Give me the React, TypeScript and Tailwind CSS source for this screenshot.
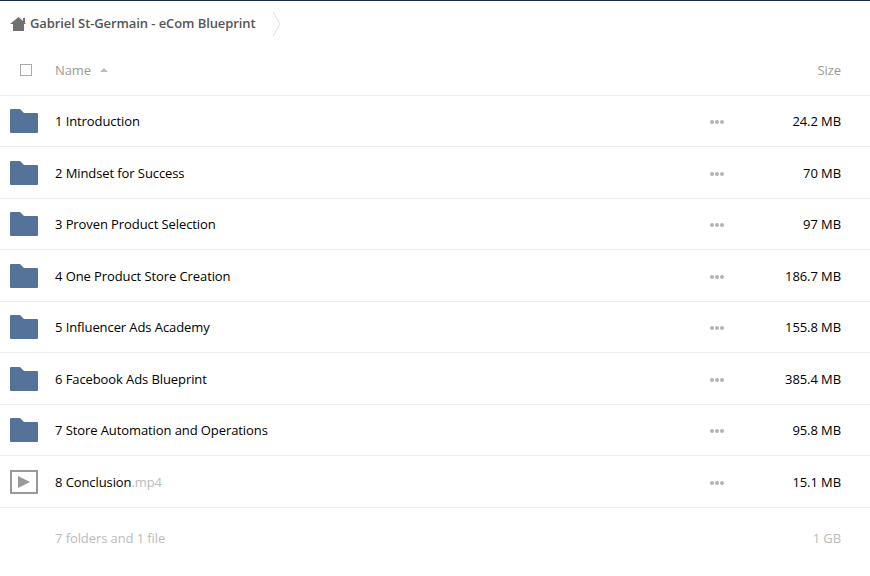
const rows = [
  { name: "1 Introduction", size: "24.2 MB" },
  { name: "2 Mindset for Success", size: "70 MB" },
  { name: "3 Proven Product Selection", size: "97 MB" },
  { name: "4 One Product Store Creation", size: "186.7 MB" },
  { name: "5 Influencer Ads Academy", size: "155.8 MB" },
  { name: "6 Facebook Ads Blueprint", size: "385.4 MB" },
  { name: "7 Store Automation and Operations", size: "95.8 MB" },
  { name: "8 Conclusion", ext: ".mp4", size: "15.1 MB" },
];

function FolderIcon() {
  return (
    <svg width="28" height="24" viewBox="0 0 28 24" className="block">
      <path d="M0 1a1 1 0 0 1 1-1h9l4 4h13a1 1 0 0 1 1 1v18a1 1 0 0 1-1 1H1a1 1 0 0 1-1-1z" fill="#557398" />
    </svg>
  );
}

function VideoIcon() {
  return (
    <svg width="28" height="24" viewBox="0 0 28 24" className="block">
      <rect x="1" y="1" width="26" height="22" fill="none" stroke="#999" strokeWidth="2" />
      <path d="M8 6 L20 12 L8 18 Z" fill="#999" />
    </svg>
  );
}

function HomeIcon() {
  return (
    <svg width="16" height="14" viewBox="0 0 16 14" className="block">
      <path d="M8.500 0 L13 4 V1 H15 V6 L16 7 H14 V14 H3 V7 H0 Z" fill="#707070" />
    </svg>
  );
}

function Dots() {
  return (
    <div className="flex gap-[1px]">
      <span className="h-[4px] w-[4px] rounded-full bg-[#b3b3b3]" />
      <span className="h-[4px] w-[4px] rounded-full bg-[#b3b3b3]" />
      <span className="h-[4px] w-[4px] rounded-full bg-[#b3b3b3]" />
    </div>
  );
}

export default function App() {
  return (
    <div className="h-[576px] w-[870px] overflow-hidden border-t border-[#1d2d44] bg-white font-['Open_Sans',sans-serif] text-[13px] tracking-[-0.09px]">
      <div className="flex h-[45px] items-center pl-[10px]">
        <HomeIcon />
        <span className="ml-[4px] font-semibold text-[#555]">Gabriel St-Germain - eCom Blueprint</span>
        <svg width="9" height="26" viewBox="0 0 9 26" className="ml-[16px]">
          <path d="M1 0.500 L8 13 L1 25.500" fill="none" stroke="#ddd" />
        </svg>
      </div>

      <div className="flex h-[49.900px] items-center border-b border-[#ededed]">
        <div className="ml-[20px] h-[12px] w-[12px] border border-[#aaa]" />
        <span className="ml-[23px] text-[#999]">Name</span>
        <span className="ml-[9px] mb-[1px] h-0 w-0 border-x-[4.500px] border-b-[4.500px] border-x-transparent border-b-[#bbb]" />
        <span className="ml-auto pr-[29px] text-[#999]">Size</span>
      </div>

      {rows.map((row) => (
        <div key={row.name} className="flex h-[51.500px] items-center border-b border-[#ededed]">
          <div className="ml-[10px] w-[28px]">{row.ext ? <VideoIcon /> : <FolderIcon />}</div>
          <span className="ml-[17px] mt-[1.400px] text-black">
            {row.name}
            {row.ext && <span className="text-[#bbb]">{row.ext}</span>}
          </span>
          <div className="ml-auto pt-[2px]">
            <Dots />
          </div>
          <span className="mt-[1.400px] w-[146px] pr-[29px] text-right text-black">{row.size}</span>
        </div>
      ))}

      <div className="flex h-[61px] items-center text-[#bbb]">
        <span className="ml-[55px]">7 folders and 1 file</span>
        <span className="ml-auto pr-[29px]">1 GB</span>
      </div>
    </div>
  );
}
